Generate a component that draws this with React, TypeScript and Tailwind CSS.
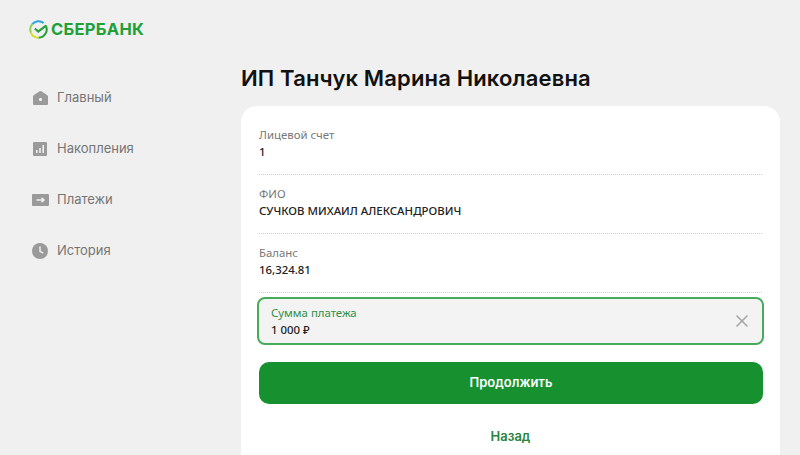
import { X } from "lucide-react";

const menu = [
  {
    label: "Главный",
    icon: (
      <svg width="15" height="14" viewBox="0 0 15 14" fill="none">
        <path d="M0 5.5 Q0 4.6 1 4 L6.2 0.5 Q7.5 -0.3 8.8 0.5 L14 4 Q15 4.6 15 5.5 V13 a1 1 0 0 1-1 1 H1 a1 1 0 0 1-1-1Z" fill="#9a9a9a" />
        <rect x="6" y="7" width="3" height="3" rx="1.2" fill="#f0f0f0" />
      </svg>
    ),
  },
  {
    label: "Накопления",
    icon: (
      <svg width="14" height="14" viewBox="0 0 14 14" fill="none">
        <rect width="14" height="14" rx="1" fill="#9a9a9a" />
        <rect x="3" y="8" width="1.6" height="3" fill="#f0f0f0" />
        <rect x="6.2" y="6" width="1.6" height="5" fill="#f0f0f0" />
        <rect x="9.4" y="3" width="1.6" height="8" fill="#f0f0f0" />
      </svg>
    ),
  },
  {
    label: "Платежи",
    icon: (
      <svg width="17" height="12" viewBox="0 0 17 12" fill="none">
        <rect width="17" height="12" rx="1" fill="#9a9a9a" />
        <path d="M4.5 6 H11.5 M9.5 3.8 L12 6 L9.5 8.2" stroke="#f0f0f0" strokeWidth="1.5" />
      </svg>
    ),
  },
  {
    label: "История",
    icon: (
      <svg width="16" height="16" viewBox="0 0 16 16" fill="none">
        <circle cx="8" cy="8" r="8" fill="#9a9a9a" />
        <path d="M8 3.5 V8.4 L11.2 10.2" stroke="#f0f0f0" strokeWidth="1.5" />
      </svg>
    ),
  },
];

const rows = [
  { label: "Лицевой счет", value: "1" },
  { label: "ФИО", value: "СУЧКОВ МИХАИЛ АЛЕКСАНДРОВИЧ" },
  { label: "Баланс", value: "16,324.81" },
];

function Logo() {
  return (
    <div className="flex items-center">
      <svg width="19" height="19" viewBox="0 0 19 19" fill="none">
        <path d="M16.6 5.4 A8.2 8.2 0 0 1 9.5 17.7" stroke="#21a038" strokeWidth="2" />
        <path d="M9.5 17.7 A8.2 8.2 0 0 1 1.9 12.6" stroke="#d7df23" strokeWidth="2" />
        <path d="M1.9 12.6 A8.2 8.2 0 0 1 3.4 4" stroke="#8fd14f" strokeWidth="2" />
        <path d="M3.4 4 A8.2 8.2 0 0 1 14.6 3" stroke="#2aa5e0" strokeWidth="2" />
        <path d="M5.8 8.6 L9.2 11.6 L17 5.6" stroke="#21a038" strokeWidth="2" />
      </svg>
      <span className="ml-[3px] font-['Inter',sans-serif] text-[16.5px] leading-none font-bold tracking-[0.3px] text-[#21a038]">
        СБЕРБАНК
      </span>
    </div>
  );
}

export default function App() {
  return (
    <div className="flex h-[455px] overflow-hidden bg-[#f0f0f0] font-['Noto_Sans',sans-serif]">
      <aside className="w-[241px] shrink-0 pt-5 pl-[29px]">
        <Logo />
        <nav className="mt-[49px] flex flex-col gap-[31px]">
          {menu.map((m) => (
            <div key={m.label} className="flex h-5 items-center text-[13px] text-[#757575]">
              <span className="mr-2 ml-[2px] flex w-[18px] justify-center">{m.icon}</span>
              <span className="font-['Inter',sans-serif]">{m.label}</span>
            </div>
          ))}
        </nav>
      </aside>

      <main className="w-[539px] shrink-0 pt-[62px]">
        <h1 className="font-['Inter',sans-serif] text-[22px] leading-8 font-semibold tracking-[0.15px] text-[#111]">
          ИП Танчук Марина Николаевна
        </h1>
        <div className="mt-3 h-[400px] rounded-t-2xl bg-white px-[18px] pt-[21px]">
          {rows.map((r) => (
            <div key={r.label} className="mb-[11px] h-[48px] border-b border-dotted border-[#cfcfcf]">
              <div className="text-[11.4px] leading-4 text-[#777]">{r.label}</div>
              <div className="mt-[1px] text-[11.4px] leading-4 font-medium text-[#222]">{r.value}</div>
            </div>
          ))}
          <div className="-mx-[2px] -mt-[7px] flex h-[48px] items-center justify-between rounded-lg border-2 border-[#47ab5c] bg-[#f3f3f3] pr-[10px] pl-3">
            <div>
              <div className="text-[11.4px] leading-4 text-[#2f8f47]">Сумма платежа</div>
              <div className="mt-[1px] text-[11.4px] leading-4 font-medium text-[#222]">1 000 ₽</div>
            </div>
            <X size={20} strokeWidth={2} className="text-[#a8a8a8]" />
          </div>
          <button className="mt-[17px] block h-[42px] w-[504px] rounded-[10px] bg-[#179130] font-['Inter',sans-serif] text-[13px] font-semibold text-white">
            Продолжить
          </button>
          <div className="mt-[23px] text-center font-['Inter',sans-serif] text-[13px] font-semibold text-[#2b853d]">
            Назад
          </div>
        </div>
      </main>
    </div>
  );
}
